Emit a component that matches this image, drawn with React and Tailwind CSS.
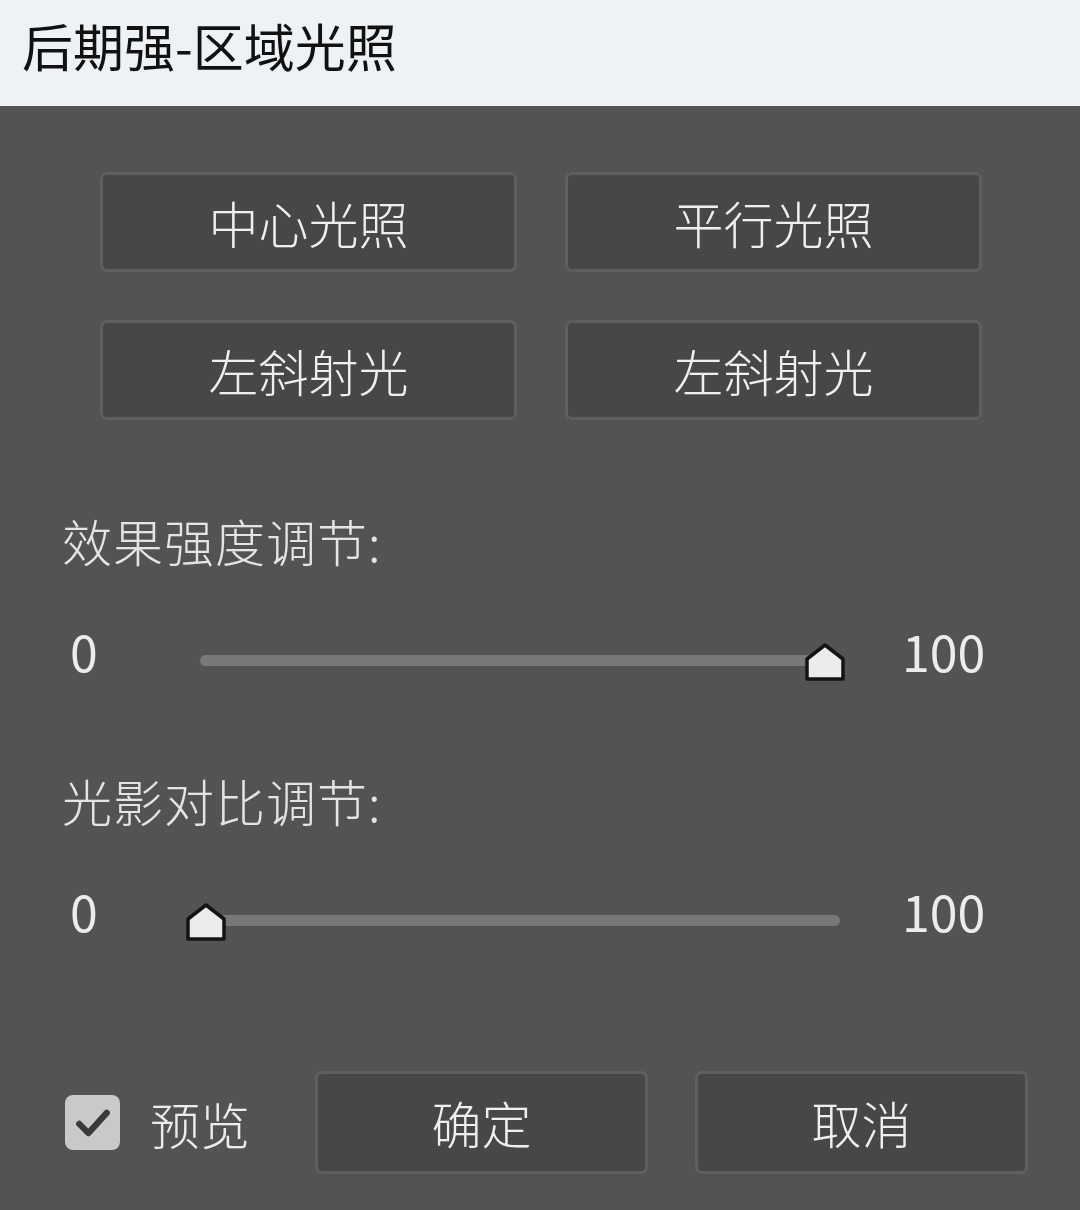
import React, { useState } from "react";

const cjk = { fontFamily: '"Noto Sans CJK SC", "Noto Sans", sans-serif' };

const Thumb = ({ left }) => (
    <svg
        className="absolute top-1/2"
        style={{ left: left - 21, transform: "translateY(-45%)" }}
        width="42"
        height="40"
        viewBox="0 0 42 40"
    >
        <path d="M3 17 L21 3 L39 17 L39 37 L3 37 Z" fill="#ececec" stroke="#141414" strokeWidth="3.5" strokeLinejoin="round" />
    </svg>
);

const Slider = ({ value }) => {
    const trackWidth = 640;
    return (
        <div className="flex items-center h-[60px]">
            <div className="w-[138px] pl-[8px] -mt-[20px] text-[50px] leading-none text-[#ececec]" style={cjk}>0</div>
            <div className="relative w-[640px] h-[11px] rounded-full bg-[#787878]">
                <Thumb left={6 + (value / 100) * (trackWidth - 21)} />
            </div>
            <div className="ml-[62px] -mt-[20px] text-[50px] leading-none text-[#ececec]" style={cjk}>100</div>
        </div>
    );
};

const PanelButton = ({ children, className = "" }) => (
    <button
        className={"flex items-center justify-center rounded-[7px] border-[3px] border-[#5f5f5f] bg-[#474747] text-[50px] font-light text-[#efefef] " + className}
        style={cjk}
    >
        {children}
    </button>
);

export default function App() {
    const [preview, setPreview] = useState(true);

    return (
        <div className="w-[1080px] h-[1210px] flex flex-col bg-[#535353]" style={cjk}>
            <div className="h-[106px] shrink-0 bg-[#eff2f5] border-b border-[#f7f7f7] flex items-center pl-[22px]">
                <span className="text-[51px] leading-none text-[#111] -mt-[14px]">后期强-区域光照</span>
            </div>

            <div className="mt-[66px] ml-[100px] w-[882px] grid grid-cols-2 gap-x-[48px] gap-y-[48px]">
                <PanelButton className="h-[100px]">中心光照</PanelButton>
                <PanelButton className="h-[100px]">平行光照</PanelButton>
                <PanelButton className="h-[100px]">左斜射光</PanelButton>
                <PanelButton className="h-[100px]">左斜射光</PanelButton>
            </div>

            <div className="mt-[96px] ml-[62px] h-[48px] text-[50px] leading-[48px] tracking-[1px] font-light text-[#e4e4e4]">效果强度调节:</div>
            <div className="mt-[66px] ml-[62px]">
                <Slider value={100} />
            </div>

            <div className="mt-[86px] ml-[62px] h-[48px] text-[50px] leading-[48px] tracking-[1px] font-light text-[#e4e4e4]">光影对比调节:</div>
            <div className="mt-[66px] ml-[62px]">
                <Slider value={0} />
            </div>

            <div className="mt-[121px] flex items-center">
                <button
                    onClick={() => setPreview(!preview)}
                    className="ml-[65px] w-[55px] h-[55px] shrink-0 rounded-[8px] bg-[#c9c9c9] flex items-center justify-center"
                >
                    {preview && (
                        <svg width="44" height="44" viewBox="0 0 24 24">
                            <path d="M4.5 12.5 L9.5 17.5 L19.5 6.5" fill="none" stroke="#3a3a3a" strokeWidth="3.4" strokeLinecap="round" strokeLinejoin="round" />
                        </svg>
                    )}
                </button>
                <span className="ml-[30px] w-[100px] shrink-0 text-[50px] leading-none font-light text-[#ececec]">预览</span>
                <PanelButton className="ml-[65px] w-[333px] h-[103px] shrink-0">确定</PanelButton>
                <PanelButton className="ml-[47px] w-[333px] h-[103px] shrink-0">取消</PanelButton>
            </div>
        </div>
    );
}
